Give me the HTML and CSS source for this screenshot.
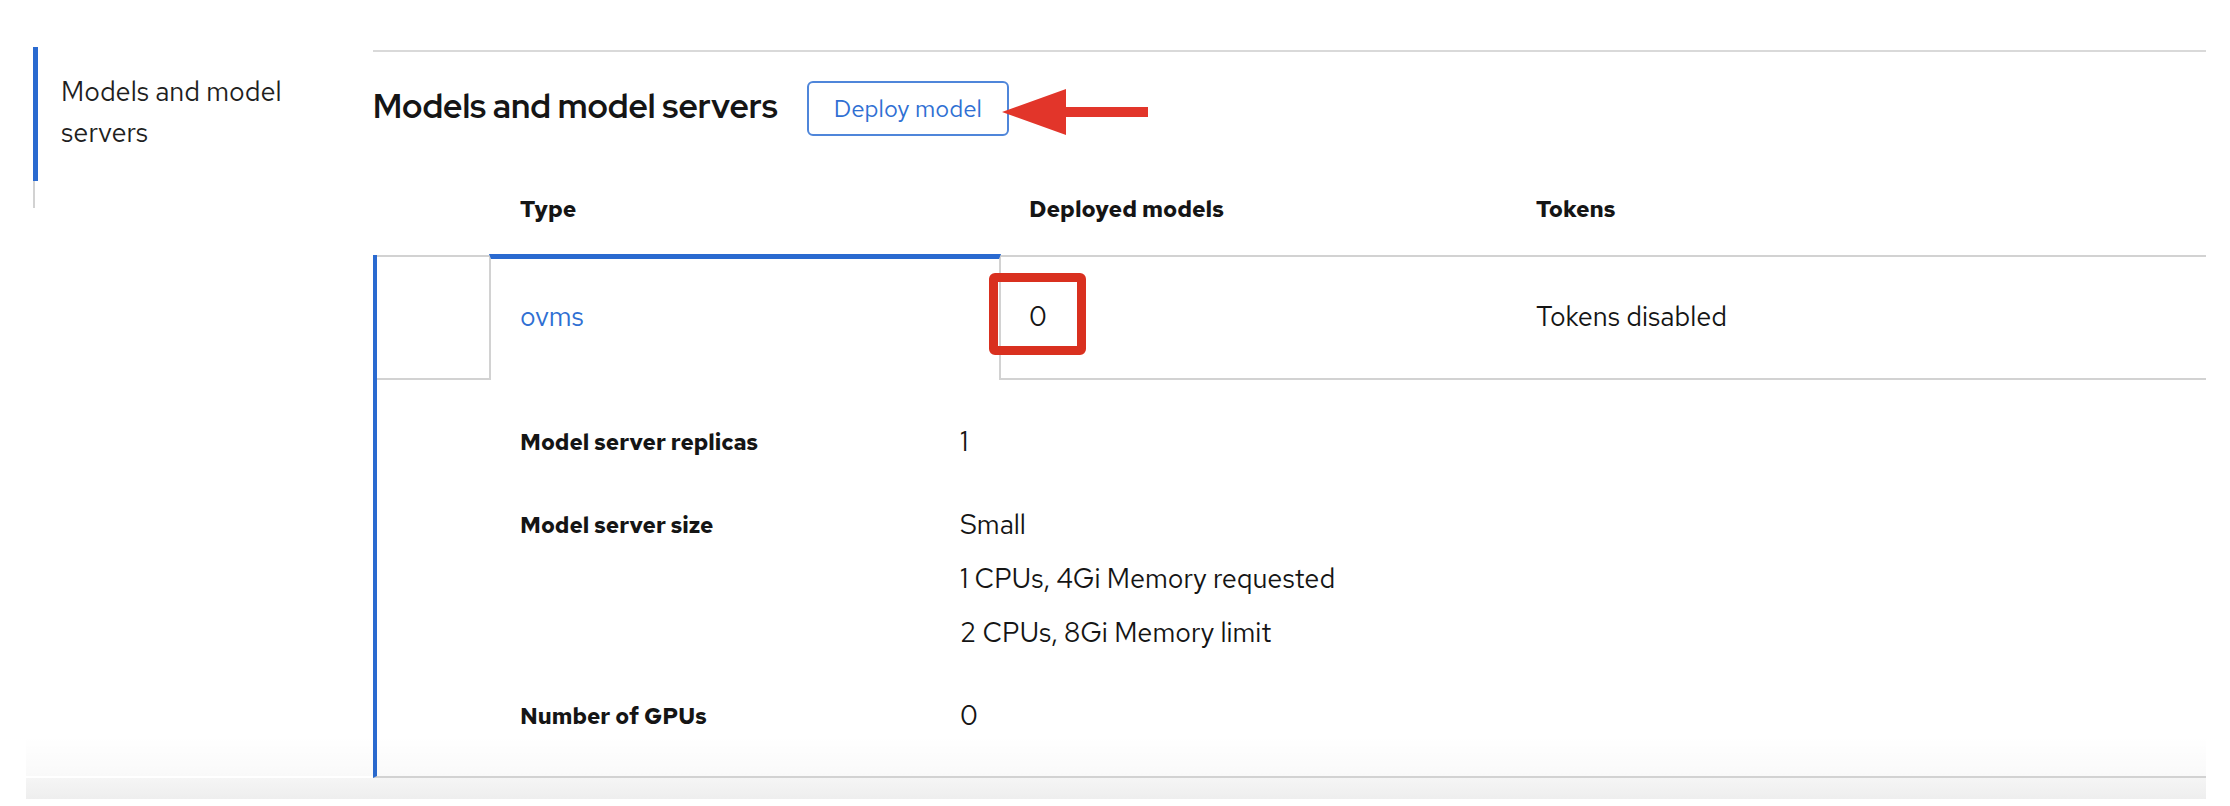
FILE: index.html
```html
<!DOCTYPE html>
<html lang="en">
<head>
<meta charset="utf-8">
<title>Models and model servers</title>
<link rel="stylesheet" href="styles.css">
</head>
<body>
<div class="page">
  <aside class="sidebar">
    <nav class="jump-nav">
      <a class="jump-item active" href="#models">Models and model servers</a>
    </nav>
  </aside>
  <main class="main" id="models">
    <div class="section-head">
      <h2 class="title">Models and model servers</h2>
      <span class="btn-wrap">
        <button class="btn-secondary" type="button">Deploy model</button>
        <svg class="arrow" width="146" height="46" viewBox="0 0 146 46" aria-hidden="true">
          <path d="M0 23 L64 0 L64 18 L146 18 L146 28 L64 28 L64 46 Z" fill="#e2352a"/>
        </svg>
      </span>
    </div>
    <div class="table">
      <div class="thead row-grid">
        <div class="th th-toggle"></div>
        <div class="th th-type">Type</div>
        <div class="th">Deployed models</div>
        <div class="th">Tokens</div>
      </div>
      <div class="tbody expanded">
        <div class="tr row-grid">
          <div class="td td-toggle"></div>
          <div class="td td-type"><a class="link" href="#ovms">ovms</a></div>
          <div class="td td-deployed"><span class="callout-anchor">0<span class="callout"></span></span></div>
          <div class="td">Tokens disabled</div>
        </div>
        <div class="detail">
          <dl class="dl">
            <dt>Model server replicas</dt>
            <dd><div>1</div></dd>
            <dt>Model server size</dt>
            <dd>
              <div>Small</div>
              <div>1 CPUs, 4Gi Memory requested</div>
              <div>2 CPUs, 8Gi Memory limit</div>
            </dd>
            <dt>Number of GPUs</dt>
            <dd><div>0</div></dd>
          </dl>
        </div>
      </div>
    </div>
  </main>
</div>
<div class="bottom-band"></div>
</body>
</html>
```
FILE: styles.css
```css
html, body {
  margin: 0;
  padding: 0;
  background: #ffffff;
}

body {
  font-family: "Red Hat Text", "Liberation Sans", Arial, sans-serif;
  color: #151515;
}

.page {
  position: relative;
  display: flex;
  align-items: flex-start;
  padding: 0 24px 0 33px;
}

.page::after {
  content: "";
  position: absolute;
  left: 26px;
  right: 24px;
  bottom: 2px;
  height: 40px;
  background: linear-gradient(to bottom, rgba(0, 0, 0, 0), rgba(0, 0, 0, 0.025));
  pointer-events: none;
}

/* ---------- jump links sidebar ---------- */
.sidebar {
  flex: 0 0 340px;
  margin-top: 47px;
}

.jump-nav {
  width: 290px;
  border-left: 2px solid #d2d2d2;
  padding-bottom: 27px;
}

.jump-item {
  display: block;
  margin-left: -2px;
  border-left: 5px solid #2a6ad0;
  padding: 24px 0 28px 23px;
  font-size: 27px;
  line-height: 41px;
  color: #1f1f1f;
  text-decoration: none;
}

/* ---------- main section ---------- */
.main {
  flex: 1 1 auto;
  margin-top: 50px;
  border-top: 2px solid #d9d9d9;
}

.section-head {
  display: flex;
  align-items: center;
  gap: 29px;
  padding-top: 29px;
}

.title {
  margin: 0 0 5px;
  font-family: "Red Hat Display", "Liberation Sans", Arial, sans-serif;
  font-size: 33.4px;
  font-weight: 700;
  line-height: 40px;
  color: #151515;
}

.btn-wrap {
  position: relative;
  display: inline-flex;
}

.btn-secondary {
  height: 55px;
  padding: 0 25px;
  border: 2px solid #4f86da;
  border-radius: 6px;
  background: #ffffff;
  color: #2f6fd3;
  font-family: inherit;
  font-size: 24px;
  line-height: 30px;
}

.arrow {
  position: absolute;
  left: calc(100% - 7px);
  top: 8px;
}

/* ---------- table ---------- */
.row-grid {
  display: grid;
  grid-template-columns: 112px 512px 507px 1fr;
}

.thead {
  padding-left: 4px;
}

.th {
  padding: 58px 0 31px 28px;
  font-size: 23px;
  font-weight: 700;
  line-height: 30px;
}

.th-toggle {
  padding-left: 0;
}

.th-type {
  padding-left: 31px;
}

.expanded {
  border-left: 4px solid #2a6ad0;
  border-bottom: 2px solid #d2d2d2;
}

.td {
  border-top: 2px solid #d2d2d2;
  border-bottom: 2px solid #d2d2d2;
  padding: 45px 0 46px 28px;
  font-size: 27px;
  line-height: 30px;
}

.td-toggle {
  padding: 0;
}

.td-type {
  margin-top: -1px;
  border-top: 5px solid #2a6ad0;
  border-bottom: 0;
  border-left: 2px solid #d2d2d2;
  border-right: 2px solid #d2d2d2;
  padding: 43px 0 0 29px;
}

.link {
  color: #2f6fd3;
  text-decoration: none;
}

.callout-anchor {
  position: relative;
  display: inline-block;
  line-height: 30px;
}

.callout {
  position: absolute;
  left: -40px;
  top: -29px;
  width: 97px;
  height: 82px;
  box-sizing: border-box;
  border: 9px solid #d9301f;
  border-radius: 6px;
}

/* ---------- expanded detail ---------- */
.detail {
  padding: 35px 0 33px 143px;
}

.dl {
  display: grid;
  grid-template-columns: 440px 1fr;
  row-gap: 29px;
  margin: 0;
}

.dl dt {
  font-size: 22.6px;
  font-weight: 700;
  line-height: 54px;
}

.dl dd {
  margin: 0;
  font-size: 27px;
  line-height: 54px;
}

.bottom-band {
  height: 21px;
  margin: 0 24px 0 26px;
  background: linear-gradient(to bottom, #f5f5f5, #eeeeee);
}
```
